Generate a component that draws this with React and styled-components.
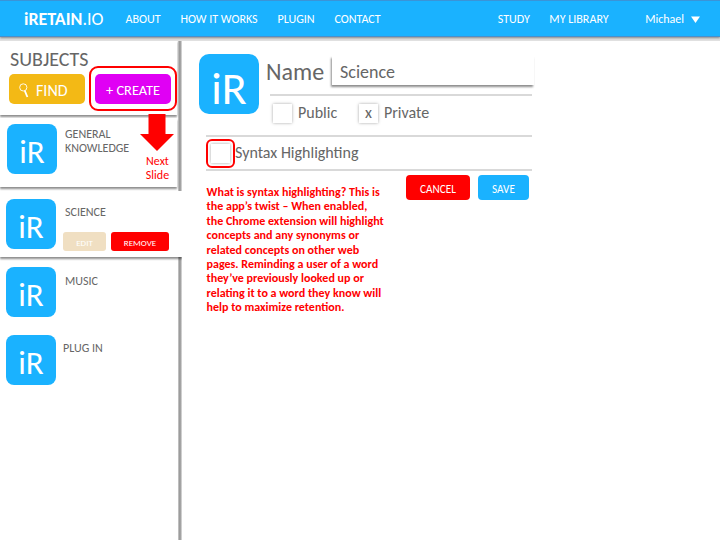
import React from 'react';
import styled, { createGlobalStyle } from 'styled-components';

const blue = '#1ab2ff';
const red = '#ff0000';
const ink = '#666666';

const GlobalStyle = createGlobalStyle`
  * { box-sizing: border-box; }
  body {
    margin: 0;
    background: #fff;
    color: ${ink};
    font-family: Carlito, Calibri, Lato, sans-serif;
  }
`;

const Page = styled.div`
  display: flex;
  flex-direction: column;
  width: 720px;
  height: 540px;
  overflow: hidden;
`;

const Header = styled.header`
  position: relative;
  z-index: 2;
  display: flex;
  align-items: center;
  flex: none;
  height: 37px;
  padding: 1px 20px 0 24px;
  background: ${blue};
  border-top: 1px solid #3a94d8;
  border-bottom: 1px solid #4a8fcb;
  box-shadow: 0 1px 2px rgba(0, 0, 0, 0.4), 0 4px 0 #e0e0e0;
  color: #fff;
`;

const Logo = styled.div`
  width: 101.5px;
  font-size: 18px;
  line-height: 22px;
`;

const Nav = styled.nav`
  display: flex;
  flex: 1;
  gap: 19.8px;
`;

const NavLink = styled.a`
  font-size: 12.05px;
  line-height: 16px;
  white-space: nowrap;
`;

const NavEnd = styled.div`
  display: flex;
  align-items: center;
  gap: 19.5px;
`;

const UserMenu = styled.div`
  display: flex;
  align-items: center;
  gap: 7px;
  margin-left: 17px;
  font-size: 12px;
  line-height: 16px;
`;

const Body = styled.div`
  display: flex;
  flex: 1;
`;

const Sidebar = styled.aside`
  width: 182px;
  flex: none;
  padding-top: 3px;
  background: linear-gradient(to right, transparent 178px, #cfcfcf 178px, #9c9c9c 179.5px, #a3a3a3 180.5px, #e4e4e4 182px) 0 4px no-repeat;
`;

const SearchPanel = styled.section`
  width: 177px;
  height: 75px;
  padding: 6px 0 0 10px;
  background: #fff;
  box-shadow: 0 2px 2px rgba(0, 0, 0, 0.45);
`;

const PanelTitle = styled.h2`
  margin: 0;
  font-size: 20px;
  font-weight: 400;
  line-height: 26px;
`;

const Actions = styled.div`
  display: flex;
  align-items: flex-start;
  margin-left: -1px;
`;

const FindButton = styled.button`
  display: flex;
  align-items: center;
  width: 76px;
  height: 30px;
  margin-top: 2px;
  padding: 3px 0 0 10px;
  gap: 7px;
  border: 0;
  border-radius: 5px;
  background: #f3b915;
  color: #fff;
  font: 16px/20px Carlito, Calibri, Lato, sans-serif;
`;

const HighlightRing = styled.div`
  position: relative;
  z-index: 1;
  border: 2px solid ${red};
  border-radius: ${(p) => p.$radius}px;
  padding: ${(p) => p.$pad};
  margin: ${(p) => p.$margin};
`;

const CreateButton = styled.button`
  display: block;
  width: 76px;
  height: 30px;
  padding: 2px 0 0;
  border: 0;
  border-radius: 5px;
  background: #e000f4;
  color: #fff;
  font: 14.4px/20px Carlito, Calibri, Lato, sans-serif;
`;

const Row = styled.article`
  position: relative;
  display: flex;
  width: ${(p) => p.$width || 177}px;
  height: ${(p) => p.$height}px;
  margin-top: ${(p) => p.$gap || 0}px;
  padding: ${(p) => p.$pad};
  gap: ${(p) => p.$space}px;
  background: ${(p) => (p.$raised ? '#fff' : 'transparent')};
  box-shadow: ${(p) => (p.$raised ? '0 2px 2px rgba(0, 0, 0, 0.45)' : 'none')};
`;

const ActiveRow = styled(Row)`
  clip-path: inset(0 0 -5px 0);
`;

const Tile = styled.div`
  flex: none;
  width: ${(p) => (p.$large ? 60 : 50)}px;
  height: ${(p) => (p.$large ? 60 : 50)}px;
  padding-top: ${(p) => (p.$large ? 6 : 5)}px;
  border-radius: ${(p) => (p.$large ? 10 : 8)}px;
  background: ${blue};
  color: #fff;
  font-size: ${(p) => (p.$large ? 46 : 33)}px;
  line-height: ${(p) => (p.$large ? 56 : 46)}px;
  text-align: center;
`;

const RowText = styled.div`
  padding-top: ${(p) => p.$top}px;
  font-size: 12px;
  line-height: 14px;
`;

const RowButtons = styled.div`
  display: flex;
  gap: 5px;
  margin: 13px 0 0 -2px;
`;

const SmallButton = styled.button`
  width: ${(p) => p.$width}px;
  height: 19px;
  padding: 3px 0 0;
  border: 0;
  border-radius: 3px;
  background: ${(p) => p.$bg};
  color: #fff;
  font: 9px/14px Carlito, Calibri, Lato, sans-serif;
`;

const NextCallout = styled.div`
  position: absolute;
  left: 140px;
  top: -4px;
  width: 35px;
  color: ${red};
  font-size: 12px;
  line-height: 14px;
  text-align: center;
  svg { display: block; margin-bottom: 3px; }
`;

const Main = styled.main`
  flex: 1;
  padding: 17px 0 0 17px;
`;

const NameBlock = styled.section`
  display: flex;
  gap: 6px;
`;

const Fields = styled.div`
  width: 269px;
`;

const NameRow = styled.div`
  display: flex;
  height: 40px;
`;

const NameLabel = styled.label`
  width: 67px;
  padding: 3px 0 0 1px;
  font-size: 24px;
  line-height: 30px;
`;

const NameField = styled.div`
  width: 202px;
  height: 29px;
  margin-top: 2px;
  padding: 4px 0 0 8px;
  box-shadow: -1px 2px 2px rgba(0, 0, 0, 0.45);
  background: #fff;
  font-size: 18px;
  line-height: 24px;
`;

const Divider = styled.div`
  width: ${(p) => p.$width}px;
  height: 2px;
  margin-left: ${(p) => p.$left}px;
  background: #d9d9d9;
`;

const Options = styled.div`
  display: flex;
  align-items: center;
  height: 39px;
  padding: 0 0 5px 8px;
  font-size: 16px;
  line-height: 20px;
`;

const Option = styled.label`
  display: flex;
  align-items: center;
  gap: 6px;
  width: 86px;
`;

const CheckBox = styled.span`
  display: block;
  width: 19px;
  height: 19px;
  background: #fff;
  box-shadow: 0 0 3px rgba(0, 0, 0, 0.35);
  line-height: 18px;
  text-align: center;
`;

const SyntaxRow = styled.div`
  display: flex;
  align-items: center;
  height: 32px;
  padding-left: 7px;
  font-size: 16px;
  line-height: 20px;
`;

const Lower = styled.div`
  display: flex;
  width: 330px;
  padding-left: 7.5px;
`;

const Note = styled.p`
  flex: 1;
  margin: 14px 0 0;
  color: ${red};
  font-size: 12.05px;
  font-weight: 700;
  line-height: 14.4px;
  white-space: nowrap;
`;

const FormButtons = styled.div`
  display: flex;
  gap: 8px;
  margin-top: 3.5px;
`;

const FormButton = styled.button`
  width: ${(p) => p.$width}px;
  height: 25px;
  padding: 3px 0 0;
  border: 0;
  border-radius: 4px;
  background: ${(p) => p.$bg};
  color: #fff;
  font: 11.2px/16px Carlito, Calibri, Lato, sans-serif;
`;

const SearchIcon = () => (
  <svg width="10" height="16" viewBox="0 0 10 16" fill="none" stroke="#fff">
    <circle cx="4.3" cy="4.4" r="3.6" strokeWidth="0.9" />
    <path d="M5.8 7.8 8.4 14" strokeWidth="1.8" />
  </svg>
);

export default function App() {
  return (
    <Page>
      <GlobalStyle />
      <Header>
        <Logo><b>iRETAIN</b>.IO</Logo>
        <Nav>
          <NavLink>ABOUT</NavLink>
          <NavLink>HOW IT WORKS</NavLink>
          <NavLink>PLUGIN</NavLink>
          <NavLink>CONTACT</NavLink>
        </Nav>
        <NavEnd>
          <NavLink>STUDY</NavLink>
          <NavLink>MY LIBRARY</NavLink>
          <UserMenu>
            Michael
            <svg width="9" height="7" viewBox="0 0 9 7"><path d="M0 0.5H9L4.5 7Z" fill="#fff" /></svg>
          </UserMenu>
        </NavEnd>
      </Header>
      <Body>
        <Sidebar>
          <SearchPanel>
            <PanelTitle>SUBJECTS</PanelTitle>
            <Actions>
              <FindButton><SearchIcon />FIND</FindButton>
              <HighlightRing $radius={9} $pad="6px 4px 5px" $margin="-6px 0 0 4px">
                <CreateButton>+ CREATE</CreateButton>
              </HighlightRing>
            </Actions>
          </SearchPanel>
          <Row $raised $height={69} $gap={3} $pad="6px 0 0 7px" $space={8}>
            <Tile>iR</Tile>
            <RowText $top={3}>GENERAL<br />KNOWLEDGE</RowText>
            <NextCallout>
              <svg width="34" height="37" viewBox="0 0 34 37"><path d="M8.5 0H25.5V20H34L17 37L0 20H8.5Z" fill={red} /></svg>
              Next<br />Slide
            </NextCallout>
          </Row>
          <ActiveRow $raised $width={182} $height={66} $gap={4} $pad="8px 0 0 6px" $space={9}>
            <Tile>iR</Tile>
            <RowText $top={6}>
              SCIENCE
              <RowButtons>
                <SmallButton $width={43} $bg="#f0dfc2">EDIT</SmallButton>
                <SmallButton $width={58} $bg={red}>REMOVE</SmallButton>
              </RowButtons>
            </RowText>
          </ActiveRow>
          <Row $height={58} $gap={10} $pad="0 0 0 6px" $space={9}>
            <Tile>iR</Tile>
            <RowText $top={7}>MUSIC</RowText>
          </Row>
          <Row $height={58} $gap={10} $pad="0 0 0 6px" $space={7}>
            <Tile>iR</Tile>
            <RowText $top={6}>PLUG IN</RowText>
          </Row>
        </Sidebar>
        <Main>
          <NameBlock>
            <Tile $large>iR</Tile>
            <Fields>
              <NameRow>
                <NameLabel>Name</NameLabel>
                <NameField>Science</NameField>
              </NameRow>
              <Divider $left={5} $width={262} />
              <Options>
                <Option><CheckBox />Public</Option>
                <Option><CheckBox>x</CheckBox>Private</Option>
              </Options>
            </Fields>
          </NameBlock>
          <Divider $left={7} $width={326} />
          <SyntaxRow>
            <HighlightRing $radius={6} $pad="3px" $margin="0">
              <CheckBox />
            </HighlightRing>
            Syntax Highlighting
          </SyntaxRow>
          <Divider $left={7} $width={326} />
          <Lower>
            <Note>
              What is syntax highlighting? This is<br />
              the app’s twist – When enabled,<br />
              the Chrome extension will highlight<br />
              concepts and any synonyms or<br />
              related concepts on other web<br />
              pages. Reminding a user of a word<br />
              they’ve previously looked up or<br />
              relating it to a word they know will<br />
              help to maximize retention.
            </Note>
            <FormButtons>
              <FormButton $width={64} $bg={red}>CANCEL</FormButton>
              <FormButton $width={51} $bg={blue}>SAVE</FormButton>
            </FormButtons>
          </Lower>
        </Main>
      </Body>
    </Page>
  );
}
